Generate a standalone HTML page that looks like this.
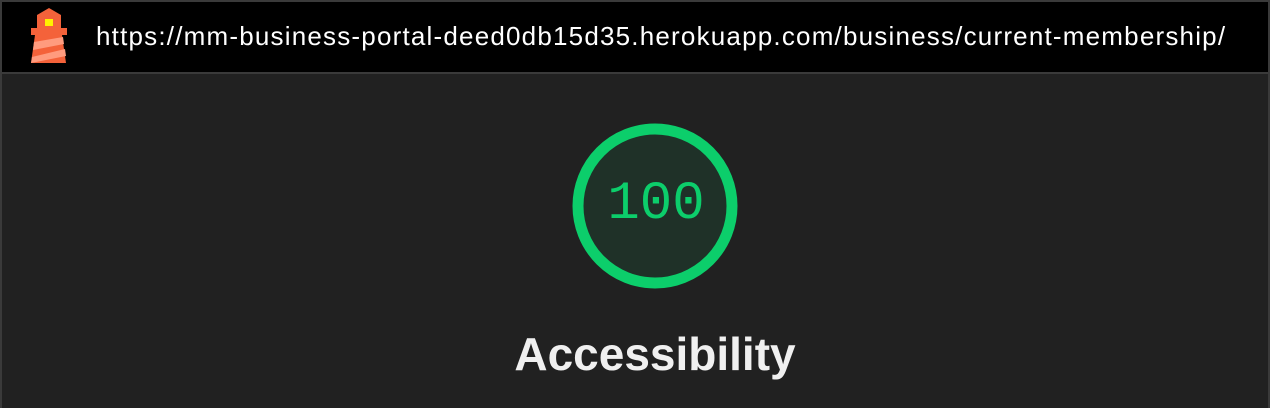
<!DOCTYPE html>
<html><head><style>
html,body{margin:0;padding:0;width:1270px;height:408px;overflow:hidden;background:#212121;font-family:"Liberation Sans",sans-serif}
.hdr{position:absolute;left:0;top:0;width:1270px;height:72px;background:#000;border-bottom:2px solid #3a3a3a}
.frame{position:absolute;left:0;top:0;width:1266px;height:406px;border:2px solid #3a3a3a;border-bottom:none;pointer-events:none}
.url{position:absolute;left:96px;top:21px;color:#fff;font-size:26px;white-space:nowrap;letter-spacing:1.2px}
.score{position:absolute;left:606px;top:177px;width:100px;text-align:center;color:#0cce6b;font-family:"Liberation Mono",monospace;font-size:54px;line-height:56px}
.title{position:absolute;left:0;width:1310px;text-align:center;top:326px;color:#f0f0f0;font-weight:bold;font-size:46px;line-height:56px}
</style></head><body>
<div class="hdr"></div>
<svg style="position:absolute;left:0;top:0" width="80" height="72" viewBox="0 0 80 72">
<polygon points="37,15 49,8 61,15 61,28 37,28" fill="#f4623a"/>
<rect x="45" y="19" width="8" height="7" fill="#fff200"/>
<rect x="31" y="28" width="36" height="7" fill="#f4623a"/>
<polygon points="35,35 62,35 66,63 31,63" fill="#f4623a"/>
<polygon points="34,42 63,37 64,44 33,50" fill="#ff9b7e"/>
<polygon points="32,57 65,49 66,56 31,63" fill="#ff9b7e"/>
</svg>
<div class="url">https://mm-business-portal-deed0db15d35.herokuapp.com/business/current-membership/</div>
<svg style="position:absolute;left:570px;top:121px" width="170" height="170">
<circle cx="85" cy="85" r="77" fill="#1f3128" stroke="#0cce6b" stroke-width="11"/>
</svg>
<div class="score">100</div>
<div class="title">Accessibility</div>
<div class="frame"></div>
</body></html>
